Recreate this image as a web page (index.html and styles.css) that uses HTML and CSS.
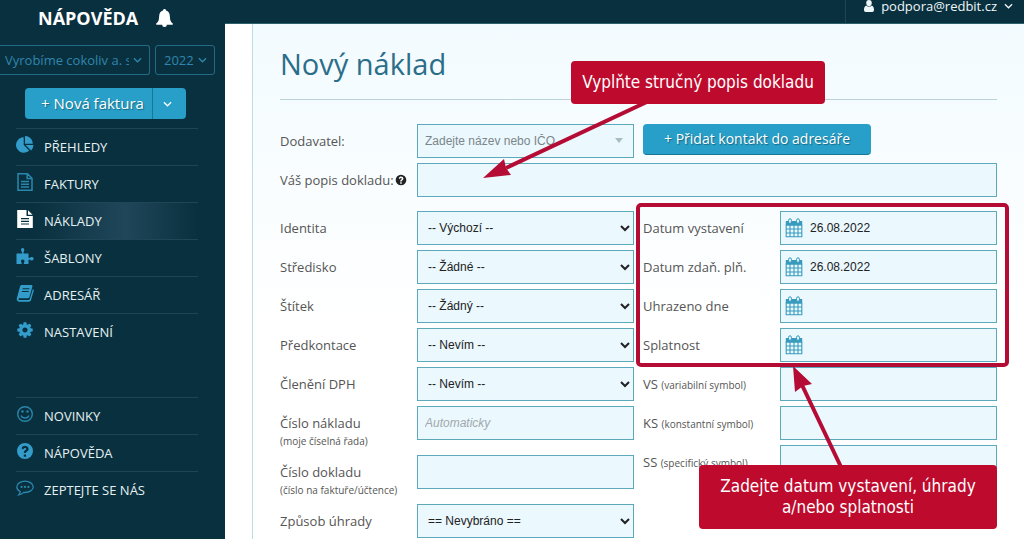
FILE: index.html
```html
<!DOCTYPE html>
<html lang="cs">
<head>
    <meta charset="UTF-8">
    <meta name="viewport" content="width=device-width, initial-scale=1.0">
    <title>Nový náklad</title>
    <link rel="stylesheet" href="styles.css">
</head>
<body>
    <svg class="sprite" aria-hidden="true">
        <symbol id="chevron" viewBox="0 0 10 6"><path d="M1 1l4 4 4-4" fill="none" stroke="currentColor" stroke-width="1.4"/></symbol>
        <symbol id="bell" viewBox="0 0 18 20"><path d="M9 0c1 0 1.600.7 1.600 1.600 2.700.8 4 3 4.100 6.200.1 4 .8 5.800 3 7.400.5.500.3 1.300-.5 1.300H11.500a2.500 2.500 0 0 1-5 0H.8c-.8 0-1-.8-.5-1.300 2.200-1.600 2.900-3.400 3-7.400.1-3.200 1.400-5.400 4.100-6.200C7.400.7 8 0 9 0z"/></symbol>
        <symbol id="pie" viewBox="0 0 1792 1792"><path d="M768 890l546 546q-106 108-247.500 168T768 1664q-209 0-385.500-103T103 1281.500 0 896t103-385.500T382.500 231 768 128v762zm187 6h773q0 157-60 298.500T1500 1442zm709-128H896V0q209 0 385.500 103T1561 382.500 1664 768z"/></symbol>
        <symbol id="doc-line" viewBox="0 0 18 18"><path d="M2 .8h9.500L16 5.200v12H2zM11.200 1v4.500H16M5 8.500h8M5 11.200h8M5 14h8" fill="none" stroke="currentColor" stroke-width="1.500"/></symbol>
        <symbol id="doc-full" viewBox="0 0 18 18"><path d="M1.200 0h9.300v6h6.300v12H1.200zM12 .2L16.600 4.700H12zM5 8v1.200h8V8zm0 2.700v1.200h8v-1.200zm0 2.700v1.200h8v-1.200z" fill-rule="evenodd"/></symbol>
        <symbol id="puzzle" viewBox="0 0 18 18"><path d="M.5 6.500h5.200c.8 0 .7-.8.300-1.300C4.800 3.600 4.600 1 6.600 1s2 2.500 1 4.100c-.4.700-.3 1.400.6 1.400h4.300v3.700c0 .9.700.9 1.300.5 1.300-1 3.800-1 3.800 1s-2.400 2.100-3.700 1.100c-.7-.5-1.400-.4-1.400.6V17H8.600c-1 0-1-.7-.6-1.300.8-1.300.7-3.200-1.300-3.200s-2 2-1.200 3.200c.4.700.3 1.300-.7 1.300H.5z"/></symbol>
        <symbol id="book" viewBox="0 0 18 18"><path d="M6 1h9.200c1 0 1.500.7 1.200 1.600L13.500 13c-.3.800-1 1.200-1.800 1.200H3.500c-1 0-1.200.7-.9 1.300.2.400.7.500 1.200.5h8.500c.8 0 1.300-.4 1.500-1.100L16.900 5c.8.400 1 1 .8 1.800L15 16c-.3 1-1.200 1.700-2.200 1.700H3.500C1.700 17.700.3 16.200.8 14.500L4 2.600C4.300 1.600 5 1 6 1zm.7 3.200l-.3 1h6.800l.3-1zm-.7 2.700l-.3 1h6.800l.3-1z" fill-rule="evenodd"/></symbol>
        <symbol id="cog" viewBox="0 0 1792 1792"><path d="M1152 896q0-106-75-181t-181-75-181 75-75 181 75 181 181 75 181-75 75-181zm512-109v222q0 12-8 23t-20 13l-185 28q-19 54-39 91 35 50 107 138 10 12 10 25t-9 23q-27 37-99 108t-94 71q-12 0-26-9l-138-108q-44 23-91 38-16 136-29 186-7 28-36 28h-222q-14 0-24.500-8.500t-11.500-21.500l-28-184q-49-16-90-37l-141 107q-10 9-25 9-14 0-25-11-126-114-165-168-7-10-7-23 0-12 8-23 15-21 51-66.500t54-70.500q-27-50-41-99l-183-27q-13-2-21-12.500t-8-23.500v-222q0-12 8-23t19-13l186-28q14-46 39-92-40-57-107-138-10-12-10-24 0-10 9-23 26-36 98.500-107.500t94.500-71.500q13 0 26 10l138 107q44-23 91-38 16-136 29-186 7-28 36-28h222q14 0 24.500 8.500t11.500 21.500l28 184q49 16 90 37l142-107q9-9 24-9 13 0 25 10 129 119 165 170 7 8 7 22 0 12-8 23-15 21-51 66.500t-54 70.500q26 50 41 98l183 28q13 2 21 12.500t8 23.500z"/></symbol>
        <symbol id="smile" viewBox="0 0 18 18"><circle cx="9" cy="9" r="7.300" fill="none" stroke="currentColor" stroke-width="1.400"/><circle cx="6.500" cy="6.500" r="1.200"/><circle cx="11.500" cy="6.500" r="1.200"/><path d="M5 10.500c1.300 3.300 6.700 3.300 8 0" fill="none" stroke="currentColor" stroke-width="1.400"/></symbol>
        <symbol id="help" viewBox="0 0 18 18"><path d="M9 1a8 8 0 1 0 0 16A8 8 0 0 0 9 1zM7.800 12.500h2.300v2.200H7.800zM5.500 6.300C6.300 4.500 7.500 3.800 9 3.800c2 0 3.600 1.300 3.600 3.100 0 1.600-.9 2.200-1.700 2.700-.6.400-.8.600-.8 1.500H7.800c0-1.800.6-2.400 1.600-3 .6-.4.800-.6.800-1.100 0-.6-.5-1-1.200-1-.8 0-1.200.5-1.800 1.500z" fill-rule="evenodd"/></symbol>
        <symbol id="chat" viewBox="0 0 18 18"><path d="M9 2.200c4.500 0 8.200 2.500 8.200 5.700s-3.700 5.600-8.200 5.600l-1.300-.1c-1.500 1.500-3.200 2.200-5 2.500.9-.9 1.400-1.800 1.500-3.400C2.100 11.500.8 9.800.8 7.900.8 4.700 4.500 2.200 9 2.200z" fill="none" stroke="currentColor" stroke-width="1.300"/><circle cx="5.600" cy="7.900" r="1.100"/><circle cx="9" cy="7.900" r="1.100"/><circle cx="12.400" cy="7.900" r="1.100"/></symbol>
        <symbol id="user" viewBox="0 0 10 12"><path d="M5 0a2.800 3 0 0 1 2.800 3C7.800 4.800 6.600 6.200 5 6.200S2.200 4.800 2.200 3A2.800 3 0 0 1 5 0zM2.300 5.500a4 4 0 0 0 5.400 0C9.500 6 10 8 10 10c0 1-.7 2-1.700 2H1.700C.7 12 0 11 0 10c0-2 .5-4 2.300-4.500z"/></symbol>
        <symbol id="calendar" viewBox="0 0 18 20"><path d="M.8 3h16.400v4.500H.8z"/><path d="M1.200 7h15.600v11.700H1.200zM5 7v12M9 7v12M13 7v12M1 11h16M1 15h16" fill="none" stroke="currentColor" stroke-width="1.100"/><rect x="3.600" y=".8" width="2.800" height="4.600" rx="1.400" fill="#ebf8fe" stroke="currentColor"/><rect x="11.600" y=".8" width="2.800" height="4.600" rx="1.400" fill="#ebf8fe" stroke="currentColor"/></symbol>
    </svg>

    <aside class="sidebar">
        <div class="brand">
            <span>NÁPOVĚDA</span>
            <svg class="bell"><use href="#bell"/></svg>
        </div>
        <div class="switches">
            <div class="switch company">
                <select aria-label="Firma"><option>Vyrobíme cokoliv a. s.</option></select>
                <svg class="chevron"><use href="#chevron"/></svg>
            </div>
            <div class="switch year">
                <select aria-label="Rok"><option>2022</option></select>
                <svg class="chevron"><use href="#chevron"/></svg>
            </div>
        </div>
        <div class="new-invoice">
            <button type="button">+ Nová faktura</button>
            <button type="button" class="more" aria-label="Další"><svg class="chevron"><use href="#chevron"/></svg></button>
        </div>
        <nav class="menu">
            <a href="#"><svg class="icon"><use href="#pie"/></svg>PŘEHLEDY</a>
            <a href="#"><svg class="icon dim"><use href="#doc-line"/></svg>FAKTURY</a>
            <a href="#" class="active"><svg class="icon"><use href="#doc-full"/></svg>NÁKLADY</a>
            <a href="#"><svg class="icon"><use href="#puzzle"/></svg>ŠABLONY</a>
            <a href="#"><svg class="icon"><use href="#book"/></svg>ADRESÁŘ</a>
            <a href="#"><svg class="icon"><use href="#cog"/></svg>NASTAVENÍ</a>
        </nav>
        <nav class="menu">
            <a href="#"><svg class="icon dim"><use href="#smile"/></svg>NOVINKY</a>
            <a href="#"><svg class="icon"><use href="#help"/></svg>NÁPOVĚDA</a>
            <a href="#"><svg class="icon dim"><use href="#chat"/></svg>ZEPTEJTE SE NÁS</a>
        </nav>
    </aside>

    <div class="page">
        <header class="topbar">
            <a href="#" class="account">
                <svg class="user"><use href="#user"/></svg>
                podpora@redbit.cz
                <svg class="chevron"><use href="#chevron"/></svg>
            </a>
        </header>
        <main class="panel">
            <h1>Nový náklad</h1>
            <form>
                <div class="columns">
                    <div class="row">
                        <label for="supplier">Dodavatel:</label>
                        <div class="combo">
                            <select id="supplier"><option>Zadejte název nebo IČO</option></select>
                        </div>
                    </div>
                    <button type="button" class="add-contact">+ Přidat kontakt do adresáře</button>
                </div>
                <div class="row description">
                    <label for="description">Váš popis dokladu: <svg class="hint"><use href="#help"/></svg></label>
                    <input type="text" id="description">
                    <svg class="arrow arrow-description" viewBox="0 0 170 80">
                        <path class="shaft" d="M23 69L168 1"/>
                        <path d="M0 79L21 60L23 69L28 76z"/>
                    </svg>
                    <div class="callout callout-description">Vyplňte stručný popis dokladu</div>
                </div>

                <div class="columns details">
                    <div class="column">
                        <div class="row">
                            <label for="identity">Identita</label>
                            <select id="identity"><option>-- Výchozí --</option></select>
                        </div>
                        <div class="row">
                            <label for="center">Středisko</label>
                            <select id="center"><option>-- Žádné --</option></select>
                        </div>
                        <div class="row">
                            <label for="tag">Štítek</label>
                            <select id="tag"><option>-- Žádný --</option></select>
                        </div>
                        <div class="row">
                            <label for="account">Předkontace</label>
                            <select id="account"><option>-- Nevím --</option></select>
                        </div>
                        <div class="row">
                            <label for="vat">Členění DPH</label>
                            <select id="vat"><option>-- Nevím --</option></select>
                        </div>
                        <div class="row tall">
                            <label for="number">Číslo nákladu <small>(moje číselná řada)</small></label>
                            <input type="text" id="number" placeholder="Automaticky">
                        </div>
                        <div class="row tall">
                            <label for="document">Číslo dokladu <small>(číslo na faktuře/účtence)</small></label>
                            <input type="text" id="document">
                        </div>
                        <div class="row">
                            <label for="payment">Způsob úhrady</label>
                            <select id="payment"><option>== Nevybráno ==</option></select>
                        </div>
                    </div>
                    <div class="column">
                        <div class="column dates">
                            <div class="row">
                                <label for="issued">Datum vystavení</label>
                                <div class="date"><svg><use href="#calendar"/></svg><input type="text" id="issued" value="26.08.2022"></div>
                            </div>
                            <div class="row">
                                <label for="taxed">Datum zdaň. plň.</label>
                                <div class="date"><svg><use href="#calendar"/></svg><input type="text" id="taxed" value="26.08.2022"></div>
                            </div>
                            <div class="row">
                                <label for="paid">Uhrazeno dne</label>
                                <div class="date"><svg><use href="#calendar"/></svg><input type="text" id="paid"></div>
                            </div>
                            <div class="row">
                                <label for="due">Splatnost</label>
                                <div class="date"><svg><use href="#calendar"/></svg><input type="text" id="due"></div>
                            </div>
                            <svg class="arrow arrow-dates" viewBox="0 0 50 102">
                                <path class="shaft" d="M9 19L48 101"/>
                                <path d="M0 0L19 18L10 20L2 26z"/>
                            </svg>
                            <div class="callout callout-dates">Zadejte datum vystavení, úhrady a/nebo splatnosti</div>
                        </div>
                        <div class="row">
                            <label for="vs">VS <small>(variabilní symbol)</small></label>
                            <input type="text" id="vs">
                        </div>
                        <div class="row">
                            <label for="ks">KS <small>(konstantní symbol)</small></label>
                            <input type="text" id="ks">
                        </div>
                        <div class="row">
                            <label for="ss">SS <small>(specifický symbol)</small></label>
                            <input type="text" id="ss">
                        </div>
                    </div>
                </div>
            </form>
        </main>
    </div>
</body>
</html>
```
FILE: styles.css
```css
* {
    box-sizing: border-box;
}
body {
    margin: 0;
    min-height: 100vh;
    display: flex;
    background: #fff;
    color: #555;
    font-family: "Open Sans", sans-serif;
    font-size: 13px;
}
a {
    color: inherit;
    text-decoration: none;
}
svg {
    display: block;
    flex: none;
    fill: currentColor;
}
.sprite {
    position: absolute;
    width: 0;
    height: 0;
}
.chevron {
    width: 9px;
    height: 6px;
}

/* sidebar */
.sidebar {
    flex: none;
    width: 225px;
    background: #09303e;
    color: #e6f0f3;
}
.brand {
    display: flex;
    align-items: center;
    gap: 18px;
    height: 36px;
    padding-left: 38px;
    color: #fff;
    font-size: 18px;
    font-weight: 700;
}
.bell {
    width: 17px;
    height: 19px;
}
.switches {
    display: flex;
    gap: 5px;
    margin-top: 9px;
}
.switch {
    position: relative;
    color: #3086ae;
}
.switch select {
    appearance: none;
    width: 100%;
    height: 30px;
    padding: 0 20px 0 8px;
    border: 1px solid #246a85;
    border-radius: 3px;
    background: transparent;
    color: inherit;
    font: 13px "Open Sans", sans-serif;
}
.switch .chevron {
    position: absolute;
    top: 12px;
    right: 8px;
}
.company {
    width: 150px;
}
.company select {
    padding-left: 5px;
    border-left: 0;
    border-radius: 0 3px 3px 0;
}
.year {
    width: 60px;
}
.new-invoice {
    display: flex;
    width: 161px;
    height: 31px;
    margin: 13px 0 9px 25px;
    border-radius: 4px;
    background: #279fc8;
    overflow: hidden;
}
.new-invoice button {
    flex: 1;
    padding: 0 0 2px 8px;
    border: 0;
    background: none;
    color: #fff;
    font: 15px "Open Sans", sans-serif;
    text-shadow: 1px 1px 1px #176783;
}
.new-invoice .more {
    display: flex;
    flex: none;
    align-items: center;
    width: 34px;
    padding: 0 10px;
    border-left: 1px solid #1a7597;
}
.menu {
    margin: 0 27px 47px 16px;
}
.menu a {
    display: flex;
    align-items: center;
    gap: 10px;
    height: 37px;
    border-top: 1px solid #1d4656;
}
.menu a.active {
    background: linear-gradient(90deg, #09303e 10%, #20465a 60%, #09303e);
}
.menu .icon {
    width: 18px;
    height: 18px;
    margin-top: -4px;
    color: #339ccb;
}
.menu .dim {
    color: #2b86ad;
}
.menu .active .icon {
    color: #fff;
}

/* top bar */
.page {
    flex: 1;
    display: flex;
    flex-direction: column;
    min-width: 0;
}
.topbar {
    display: flex;
    justify-content: flex-end;
    height: 24px;
    border-bottom: 1px solid #2b606b;
    background: #09303e;
}
.account {
    display: flex;
    gap: 7px;
    padding: 0 11px 0 18px;
    border-left: 1px solid #1d4656;
    color: #eef6f8;
    line-height: 12px;
}
.account .user {
    width: 10px;
    height: 12px;
}
.account .chevron {
    margin-top: 3px;
}

/* form */
.panel {
    flex: 1;
    margin-left: 27px;
    padding: 0 27px;
    border-left: 1px solid #bddbe5;
    background: linear-gradient(#f2fbff, #fff 300px);
}
h1 {
    margin: 0 0 24px;
    padding: 20px 0 16px;
    border-bottom: 1px solid #b9d3d8;
    color: #2b6e89;
    font-size: 29px;
    font-weight: 400;
    line-height: 39px;
}
.columns {
    display: grid;
    grid-template-columns: 1fr 1fr;
    column-gap: 9px;
}
.details {
    margin-top: 14px;
}
.column {
    display: flex;
    flex-direction: column;
    gap: 5px;
}
.row {
    display: grid;
    grid-template-columns: 137px 1fr;
    align-items: start;
}
.tall {
    min-height: 44px;
}
.row label {
    padding-top: 7px;
    line-height: 20px;
    white-space: nowrap;
}
.row small {
    font-size: 10px;
}
.tall small {
    display: block;
    line-height: 17px;
}
.row input,
.row select {
    width: 100%;
    height: 34px;
    border: 1px solid #5ba9ba;
    border-radius: 0;
    background: #ebf8fe;
    color: #222;
    font: 12px "Liberation Sans", Arial, sans-serif;
}
.row input {
    padding: 0 7px;
}
.row select {
    padding: 0 0 0 6px;
}
.row input::placeholder {
    color: #a0a8ab;
    font-style: italic;
}
.combo {
    position: relative;
}
.combo select {
    appearance: none;
    padding-left: 7px;
    color: #7b868a;
}
.combo::after {
    content: "";
    position: absolute;
    top: 14px;
    right: 11px;
    border: 4px solid transparent;
    border-top: 5px solid #a8bcc3;
    border-bottom: 0;
}
.add-contact {
    justify-self: start;
    height: 31px;
    padding: 0 21px 2px;
    border: 0;
    border-bottom: 1px solid #1a7597;
    border-radius: 4px;
    background: #279fc8;
    color: #fff;
    font: 14px "Open Sans", sans-serif;
    text-shadow: 1px 1px 1px #176783;
}
.description {
    position: relative;
    margin-top: 5px;
}
.description label {
    display: flex;
    align-items: center;
    gap: 1px;
}
.hint {
    width: 12px;
    height: 12px;
    color: #222;
}
.date {
    position: relative;
}
.date svg {
    position: absolute;
    top: 7px;
    left: 5px;
    width: 18px;
    height: 20px;
    color: #389bbd;
}
.date input {
    padding-left: 29px;
}

/* guide notes over the form */
.dates {
    position: relative;
}
.dates::after {
    content: "";
    position: absolute;
    inset: -8px -12px -5px -7px;
    border: 4px solid #b50c35;
    border-radius: 5px;
    pointer-events: none;
}
.callout {
    position: absolute;
    z-index: 2;
    display: flex;
    align-items: center;
    justify-content: center;
    border-radius: 4px;
    background: #be0a2d;
    color: #fff;
    font-family: "DejaVu Sans Condensed", "DejaVu Sans", sans-serif;
    font-size: 17px;
    line-height: 21px;
    text-align: center;
}
.callout-description {
    top: -102px;
    left: 291px;
    width: 254px;
    height: 43px;
}
.callout-dates {
    top: 254px;
    right: 0;
    width: 298px;
    height: 64px;
    padding: 0 20px;
}
.arrow {
    position: absolute;
    z-index: 1;
    fill: #b50c35;
}
.shaft {
    stroke: #b50c35;
    stroke-width: 4;
}
.arrow-description {
    top: -64px;
    left: 203px;
    width: 170px;
    height: 80px;
}
.arrow-dates {
    top: 155px;
    left: 150px;
    width: 50px;
    height: 102px;
}
```
